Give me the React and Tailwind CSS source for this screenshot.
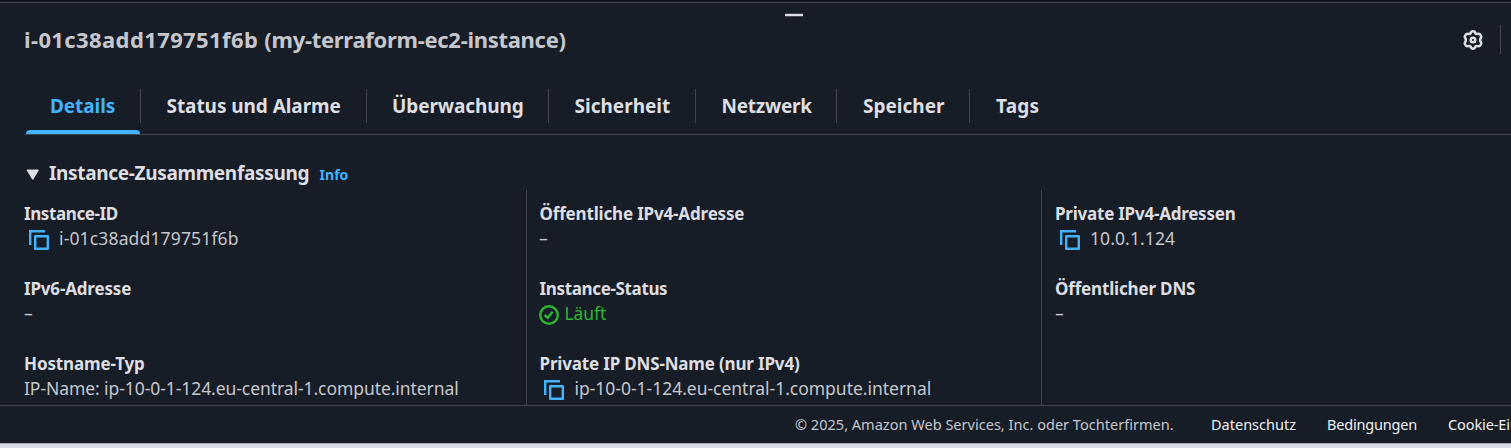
import React from "react";

function CopyIcon() {
  return (
    <svg className="ml-[5px] mr-[10px] h-5 w-5 shrink-0 translate-y-[1px]" viewBox="0 0 20 20" fill="none" stroke="#42b4ff" strokeWidth="2.4">
      <path d="M1.2 15V1.2H16" />
      <rect x="6.2" y="6.2" width="12.6" height="12.6" strokeLinejoin="round" />
    </svg>
  );
}

function StatusIcon() {
  return (
    <svg className="mr-[5px] h-5 w-5 shrink-0 translate-y-[1px]" viewBox="0 0 20 20" fill="none" stroke="#2bb534" strokeWidth="2.4">
      <circle cx="10" cy="10" r="8.8" />
      <path d="M5.6 10L8.8 12.8L13.6 6.8" />
    </svg>
  );
}

function Gear() {
  return (
    <svg className="mt-px h-5 w-5" viewBox="0 0 20 20" fill="none" stroke="#dedee3" strokeWidth="2.5" strokeLinejoin="round">
      <path d="M7.6 3.4Q8 1.3 10 1.3T12.4 3.4L13.7 4.1Q15.9 3.3 17.3 4.7Q19.2 6.9 17.2 8.9V11.1Q19.2 13.1 17.3 15.3Q15.9 16.7 13.7 15.9L12.4 16.6Q12 18.7 10 18.7T7.6 16.6L6.3 15.9Q4.1 16.7 2.7 15.3Q.8 13.1 2.8 11.1V8.9Q.8 6.9 2.7 4.7Q4.1 3.3 6.3 4.1Z" />
      <circle cx="10" cy="10" r="2.3" />
    </svg>
  );
}

function Field({ label, labelClass = "", value, valueClass = "", copy, status }) {
  return (
    <div className="h-[75px] whitespace-nowrap text-[17px] leading-[25px]">
      <div className="font-bold text-[#dedee3]"><span className={labelClass}>{label}</span></div>
      <div className={"flex items-center text-[17.5px] " + (status ? "text-[#2bb534]" : "text-[#c6c6cd]")}>
        {copy && <CopyIcon />}
        {status && <StatusIcon />}
        <span className={valueClass}>{value}</span>
      </div>
    </div>
  );
}

const tabs = [
  { label: "Details", box: "w-[115px]", text: "tracking-[-0.08px]", active: true },
  { label: "Status und Alarme", box: "w-[226px]", text: "tracking-[-0.06px] pl-[0.5px]" },
  { label: "Überwachung", box: "w-[182px]", text: "tracking-[-0.1px]" },
  { label: "Sicherheit", box: "w-[147px]", text: "pl-[0.5px]" },
  { label: "Netzwerk", box: "w-[141px]", text: "tracking-[-0.25px] pl-[0.5px]" },
  { label: "Speicher", box: "w-[133px]", text: "pl-px" },
  { label: "Tags", box: "w-[95px]", text: "tracking-[0.2px] pl-px", last: true },
];

export default function App() {
  return (
    <div className="flex h-[448px] w-[1511px] flex-col overflow-hidden bg-[#161d26] font-['Noto_Sans',sans-serif]">
      <div className="h-[3px] shrink-0 border-b border-[#424650] bg-[#131720]" />
      <div className="flex h-[21px] shrink-0 justify-center pt-[10px]">
        <div className="mr-[-77px] h-1 w-[18px] border-y border-[#424650] bg-[#dedee3]" />
      </div>
      <header className="flex h-[30px] shrink-0 items-center pl-6">
        <h1 className="whitespace-nowrap text-[22px] font-bold leading-[30px] text-[#c6c6cd]">
          <span className="tracking-[0.39px]">i-01c38add179751f6b </span>
          <span className="tracking-[-0.29px]">(my-terraform-ec2-instance)</span>
        </h1>
        <div className="ml-auto flex items-center pt-px">
          <Gear />
          <div className="ml-[17px] mr-[10px] h-[29px] w-px bg-[#424650]" />
        </div>
      </header>
      <nav className="ml-6 mt-[34px] flex h-[47px] shrink-0 border-b border-[#424650] pl-[2px]">
        {tabs.map((t) => (
          <div key={t.label} className={"h-[46px] shrink-0 " + t.box}>
            <div className={"mt-px flex h-[34px] items-center whitespace-nowrap pt-px text-[19px] font-bold " + (t.last ? "" : "border-r border-[#424650] ") + (t.active ? "pl-6 text-[#42b4ff]" : "pl-[25px] text-[#dedee3]")}>
              <span className={t.text}>{t.label}</span>
            </div>
            {t.active && <div className="mr-px mt-[7px] h-1 rounded-t-sm bg-[#42b4ff]" />}
          </div>
        ))}
      </nav>
      <div className="flex h-[55px] shrink-0 items-center whitespace-nowrap pl-[26px] pt-[21px]">
        <svg className="mr-[10px] mt-[2px] h-[11px] w-[13px]" viewBox="0 0 13 11"><path d="M1.5 1.2H12L6.75 9.8Z" fill="#dedee3" stroke="#dedee3" strokeWidth="1.6" strokeLinejoin="round" /></svg>
        <h2 className="text-[19px] font-bold leading-[30px] text-[#dedee3]"><span className="tracking-[-0.33px]">Instance-Zusammenfassung</span></h2>
        <span className="ml-[10.5px] pt-[3px] text-[14px] font-bold text-[#42b4ff]">Info</span>
      </div>
      <main className="flex h-[215px] shrink-0 overflow-hidden">
        <section className="w-[527px] shrink-0 border-r border-[#424650] pl-6 pt-[11px]">
          <Field label="Instance-ID" labelClass="tracking-[-0.4px]" value="i-01c38add179751f6b" valueClass="tracking-[0.15px]" copy />
          <Field label="IPv6-Adresse" labelClass="tracking-[-0.17px]" value="–" />
          <Field label="Hostname-Typ" labelClass="tracking-[-0.12px]" value="IP-Name: ip-10-0-1-124.eu-central-1.compute.internal" valueClass="tracking-[-0.07px]" />
        </section>
        <section className="w-[515px] shrink-0 border-r border-[#424650] pl-3 pt-[11px]">
          <Field label="Öffentliche IPv4-Adresse" labelClass="pl-[0.5px] tracking-[-0.17px]" value="–" />
          <Field label="Instance-Status" labelClass="pl-[0.5px] tracking-[-0.35px]" value="Läuft" valueClass="pl-[0.5px] tracking-[-0.1px]" status />
          <Field label="Private IP DNS-Name (nur IPv4)" labelClass="pl-[0.5px] tracking-[-0.17px]" value="ip-10-0-1-124.eu-central-1.compute.internal" valueClass="pl-[0.5px] tracking-[-0.02px]" copy />
        </section>
        <section className="grow pl-[13px] pt-[11px]">
          <Field label="Private IPv4-Adressen" labelClass="tracking-[-0.23px]" value="10.0.1.124" valueClass="tracking-[0.1px]" copy />
          <Field label="Öffentlicher DNS" labelClass="tracking-[-0.17px]" value="–" />
        </section>
      </main>
      <footer className="flex h-[38px] shrink-0 items-center overflow-hidden whitespace-nowrap border-t border-[#424650] pl-[795px] text-[14.5px]">
        <span className="w-[416px] shrink-0 text-[#c6c6cd]"><span className="tracking-[0.02px]">© 2025, Amazon Web Services, Inc. oder Tochterfirmen.</span></span>
        <span className="w-[116px] shrink-0 text-[#f3f3f7]"><span>Datenschutz</span></span>
        <span className="w-[121px] shrink-0 text-[#f3f3f7]"><span className="tracking-[-0.18px]">Bedingungen</span></span>
        <span className="shrink-0 tracking-[-0.1px] text-[#f3f3f7]"><span>Cookie-Einstellungen</span></span>
      </footer>
      <div className="h-[5px] shrink-0 border-t border-[#a7abb4] bg-[#d9dde6]" />
    </div>
  );
}
